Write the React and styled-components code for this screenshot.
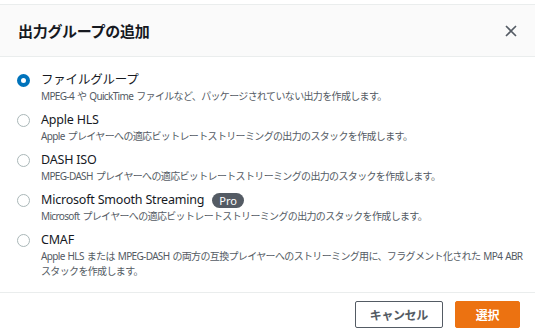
import React from 'react';
import styled, { createGlobalStyle } from 'styled-components';

const Global = createGlobalStyle`
  body {
    margin: 0;
    background: #ffffff;
    font-family: "Noto Sans", "Noto Sans CJK JP", sans-serif;
    color: #16191f;
  }
`

const Dialog = styled.div`
  width: 535px;
  height: 336px;
  padding-top: 4px;
  box-sizing: border-box;
  display: flex;
  flex-direction: column;
`
const Header = styled.div`
  height: 51px;
  background: #fafafa;
  border-top: 1px solid #eaeded;
  border-bottom: 1px solid #eaeded;
  display: flex;
  align-items: center;
  justify-content: space-between;
  padding: 0 14px 0 18px;
`
const Title = styled.h2`
  margin: 0;
  font-size: 15px;
  font-weight: 700;
  letter-spacing: -0.3px;
  color: #16191f;
`
const Close = styled.button`
  border: none;
  background: none;
  padding: 0;
  width: 20px;
  height: 20px;
  display: flex;
  align-items: center;
  justify-content: center;
  color: #545b64;
  cursor: pointer;
`
const Body = styled.div`
  flex: 1;
  padding: 14px 18px 0 17px;
  display: flex;
  flex-direction: column;
  gap: 7px;
`
const Option = styled.label`
  display: flex;
  gap: 11px;
  cursor: pointer;
`
const Radio = styled.span`
  flex: none;
  width: 13px;
  height: 13px;
  margin-top: 3px;
  border-radius: 50%;
  box-sizing: border-box;
  background: #fff;
  border: ${p => (p.checked ? '4px solid #0073bb' : '1px solid #aab7b8')};
`
const Texts = styled.div`
  display: flex;
  flex-direction: column;
`
const Label = styled.div`
  font-size: 12.5px;
  line-height: 18px;
  letter-spacing: -0.2px;
  color: #16191f;
  display: flex;
  align-items: center;
  gap: 8px;
`
const Badge = styled.span`
  background: #545b64;
  color: #fff;
  font-size: 11px;
  line-height: 15px;
  padding: 0 7px;
  border-radius: 8px;
  letter-spacing: 0;
`
const Desc = styled.div`
  font-size: 10px;
  line-height: 15px;
  color: #545b64;
  letter-spacing: -0.65px;
  word-spacing: 1px;
  white-space: nowrap;
`
const Footer = styled.div`
  height: 44px;
  border-top: 1px solid #eaeded;
  display: flex;
  justify-content: flex-end;
  align-items: flex-start;
  gap: 12px;
  padding: 8px 15px 0 0;
  box-sizing: border-box;
`
const Button = styled.button`
  height: 27px;
  padding: 0 ${p => (p.primary ? '20px' : '14px')};
  font-family: inherit;
  font-size: 12px;
  font-weight: 700;
  letter-spacing: -0.4px;
  border-radius: 2px;
  cursor: pointer;
  border: 1px solid ${p => (p.primary ? '#ec7211' : '#545b64')};
  background: ${p => (p.primary ? '#ec7211' : '#ffffff')};
  color: ${p => (p.primary ? '#ffffff' : '#545b64')};
`

const options = [
  { label: 'ファイルグループ', desc: 'MPEG-4 や QuickTime ファイルなど、パッケージされていない出力を作成します。', checked: true },
  { label: 'Apple HLS', desc: 'Apple プレイヤーへの適応ビットレートストリーミングの出力のスタックを作成します。' },
  { label: 'DASH ISO', desc: 'MPEG-DASH プレイヤーへの適応ビットレートストリーミングの出力のスタックを作成します。' },
  { label: 'Microsoft Smooth Streaming', pro: true, desc: 'Microsoft プレイヤーへの適応ビットレートストリーミングの出力のスタックを作成します。' },
  {
    label: 'CMAF',
    desc: (
      <>
        Apple HLS または MPEG-DASH の両方の互換プレイヤーへのストリーミング用に、フラグメント化された MP4 ABR
        <br />
        スタックを作成します。
      </>
    ),
  },
];

export default function App() {
  return (
    <>
      <Global />
      <Dialog>
        <Header>
          <Title>出力グループの追加</Title>
          <Close aria-label="close">
            <svg width="12" height="12" viewBox="0 0 12 12">
              <path d="M1 1L11 11M11 1L1 11" stroke="currentColor" strokeWidth="1.6" />
            </svg>
          </Close>
        </Header>
        <Body>
          {options.map((o, i) => (
            <Option key={i}>
              <Radio checked={o.checked} />
              <Texts>
                <Label>
                  {o.label}
                  {o.pro && <Badge>Pro</Badge>}
                </Label>
                <Desc>{o.desc}</Desc>
              </Texts>
            </Option>
          ))}
        </Body>
        <Footer>
          <Button>キャンセル</Button>
          <Button primary>選択</Button>
        </Footer>
      </Dialog>
    </>
  );
}
